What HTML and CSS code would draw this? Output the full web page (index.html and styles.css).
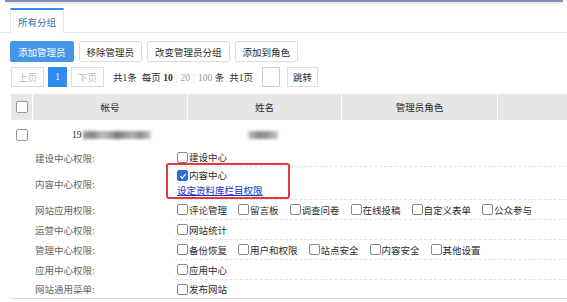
FILE: index.html
```html
<!DOCTYPE html>
<html lang="zh-CN">
<head>
    <meta charset="UTF-8">
    <title>管理员列表</title>
    <link rel="stylesheet" href="styles.css">
</head>
<body>
<div class="frame-top"></div>

<div class="tabs">
    <span class="tab">所有分组</span>
</div>

<div class="toolbar">
    <button class="btn btn-primary">添加管理员</button>
    <button class="btn">移除管理员</button>
    <button class="btn">改变管理员分组</button>
    <button class="btn">添加到角色</button>
</div>

<div class="pager">
    <span class="pg disabled">上页</span>
    <span class="pg current">1</span>
    <span class="pg disabled">下页</span>
    <span class="pg-info">共1条</span>
    <span class="pg-info">每页 <b>10</b><i class="sep">|</i><span class="size">20</span><i class="sep">|</i><span class="size">100</span> 条</span>
    <span class="pg-info">共1页</span>
    <input class="pg-input" type="text">
    <span class="pg go">跳转</span>
</div>

<div class="grid">
    <div class="grid-head">
        <div class="cell"><span class="cb"></span></div>
        <div class="cell">帐号</div>
        <div class="cell">姓名</div>
        <div class="cell">管理员角色</div>
        <div class="cell"></div>
    </div>

    <div class="grid-row">
        <div class="cell"><span class="cb"></span></div>
        <div class="cell account">19<span class="blur blur-long"></span></div>
        <div class="cell"><span class="blur blur-short"></span></div>
        <div class="cell"></div>
        <div class="cell"></div>
    </div>

    <div class="perms">
        <div class="perm">
            <div class="perm-label">建设中心权限:</div>
            <div class="perm-items">
                <label class="item"><span class="cb"></span>建设中心</label>
            </div>
        </div>
        <div class="perm">
            <div class="perm-label">内容中心权限:</div>
            <div class="perm-items stacked">
                <label class="item"><span class="cb checked"><svg viewBox="0 0 10 10" width="8" height="8"><path d="M1.5 5.2 L4 7.6 L8.6 2.4" fill="none" stroke="#fff" stroke-width="1.6"/></svg></span>内容中心</label>
                <a class="set-link" href="#">设定资料库栏目权限</a>
                <div class="mark"></div>
            </div>
        </div>
        <div class="perm">
            <div class="perm-label">网站应用权限:</div>
            <div class="perm-items">
                <label class="item"><span class="cb"></span>评论管理</label>
                <label class="item"><span class="cb"></span>留言板</label>
                <label class="item"><span class="cb"></span>调查问卷</label>
                <label class="item"><span class="cb"></span>在线投稿</label>
                <label class="item"><span class="cb"></span>自定义表单</label>
                <label class="item"><span class="cb"></span>公众参与</label>
            </div>
        </div>
        <div class="perm">
            <div class="perm-label">运营中心权限:</div>
            <div class="perm-items">
                <label class="item"><span class="cb"></span>网站统计</label>
            </div>
        </div>
        <div class="perm">
            <div class="perm-label">管理中心权限:</div>
            <div class="perm-items">
                <label class="item"><span class="cb"></span>备份恢复</label>
                <label class="item"><span class="cb"></span>用户和权限</label>
                <label class="item"><span class="cb"></span>站点安全</label>
                <label class="item"><span class="cb"></span>内容安全</label>
                <label class="item"><span class="cb"></span>其他设置</label>
            </div>
        </div>
        <div class="perm">
            <div class="perm-label">应用中心权限:</div>
            <div class="perm-items">
                <label class="item"><span class="cb"></span>应用中心</label>
            </div>
        </div>
        <div class="perm last">
            <div class="perm-label">网站通用菜单:</div>
            <div class="perm-items">
                <label class="item"><span class="cb"></span>发布网站</label>
            </div>
        </div>
    </div>
</div>
</body>
</html>
```

FILE: styles.css
```css
html, body {
    overflow: hidden;
}

body {
    margin: 0;
    font-family: "Noto Sans CJK SC", "Noto Sans", sans-serif;
    font-size: 9.5px;
    color: #2b2b2b;
    background-color: #fff;
}

.frame-top {
    height: 2px;
    margin: 0 4px 0 5px;
    background-color: #7f8fb6;
    box-shadow: 0 1px 3px rgba(0, 0, 0, 0.18);
}

/* tabs */
.tabs {
    display: flex;
    height: 24px;
    margin-top: 6px;
    padding-left: 10px;
    border-bottom: 1px solid #e6e6e6;
}

.tab {
    display: flex;
    align-items: center;
    height: 23px;
    padding: 0 7px;
    border-top: 2px solid #2d8cf0;
    border-left: 1px solid #e6e6e6;
    border-right: 1px solid #e6e6e6;
    background-color: #fff;
    color: #3a6ea5;
    margin-bottom: -1px;
}

/* buttons */
.toolbar {
    display: flex;
    gap: 5px;
    margin-top: 8px;
    padding-left: 10px;
}

.btn {
    height: 21px;
    padding: 0 7px;
    font-family: inherit;
    font-size: 9.5px;
    color: #2b2b2b;
    background-color: #fff;
    border: 1px solid #dcdcdc;
    border-radius: 2px;
}

.btn-primary {
    color: #fff;
    background-color: #4596e6;
    border-color: #4596e6;
}

/* pager */
.pager {
    display: flex;
    align-items: center;
    margin-top: 5px;
    padding-left: 11px;
    font-family: "Liberation Serif", "Noto Sans CJK SC", serif;
    height: 20px;
}

.pg {
    display: flex;
    align-items: center;
    justify-content: center;
    height: 18px;
    padding: 0 6px;
    margin-right: 4px;
    border: 1px solid #ddd;
    background-color: #fff;
    font-family: "Noto Sans CJK SC", sans-serif;
}

.pg.disabled {
    color: #bbb;
}

.pg.current {
    width: 19px;
    padding: 0;
    box-sizing: border-box;
    height: 20px;
    border-color: #2d8cf0;
    background-color: #2d8cf0;
    color: #fff;
    font-family: "Liberation Serif", serif;
}

.pg-info {
    margin-left: 5px;
}

.pager b {
    font-weight: bold;
}

.pager .size {
    color: #999;
}

.pager .sep {
    font-style: normal;
    color: #ddd;
    margin: 0 3px;
}

.pg-input {
    width: 18px;
    height: 20px;
    box-sizing: border-box;
    margin: 0 7px 0 9px;
    padding: 0;
    border: 1px solid #ccc;
}

.pg.go {
    color: #2b2b2b;
    padding: 0 5px;
}

/* table */
.grid {
    width: 660px;
    margin: 7px 0 0 11px;
}

.grid-head,
.grid-row {
    display: grid;
    grid-template-columns: 21px 154px 153px 155px 1fr;
    column-gap: 1px;
}

.grid-head {
    height: 26px;
    background-color: #fff;
}

.grid-head .cell {
    display: flex;
    align-items: center;
    justify-content: center;
    background-color: #e6e6e6;
}

.grid-row {
    height: 26px;
    padding-top: 2px;
}

.grid-row .cell {
    display: flex;
    align-items: center;
}

.grid-row .cell:first-child {
    justify-content: center;
}

.account {
    padding-left: 39px;
    font-family: "Liberation Serif", serif;
}

.grid-row .cell:nth-child(3) {
    padding-left: 60px;
}

.blur {
    display: inline-block;
    height: 8px;
    filter: blur(1.4px);
}

.blur-long {
    width: 68px;
    margin-left: 1px;
    background: linear-gradient(90deg, #999 0, #888 15%, #bbb 28%, #aaa 38%, #777 50%, #999 62%, #b0b0b0 72%, #8c8c8c 85%, #ccc 100%);
}

.blur-short {
    width: 30px;
    background: linear-gradient(90deg, #c4c4c4, #888 35%, #999 65%, #c8c8c8);
}

.cb {
    display: inline-flex;
    align-items: center;
    justify-content: center;
    width: 9px;
    height: 9px;
    border: 1px solid #888;
    border-radius: 2px;
    background-color: #fff;
    flex-shrink: 0;
}

.grid-head .cb,
.grid-row .cb {
    width: 10px;
    height: 10px;
    border-color: #999;
}

.cb.checked {
    background-color: #2b6fd8;
    border-color: #2b6fd8;
}

/* permissions */
.perms {
    border-bottom: 1px solid #ddd;
}

.perm {
    display: grid;
    grid-template-columns: 164px 1fr;
}

.perm-label {
    display: flex;
    align-items: center;
    padding-left: 24px;
    color: #666;
}

.perm-items {
    position: relative;
    display: flex;
    align-items: center;
    min-height: 19px;
    padding-left: 2px;
    border-bottom: 1px dashed #e2e2e2;
}

.perm:first-child .perm-items {
    min-height: 18px;
}

.perm.last .perm-items {
    border-bottom: none;
    min-height: 18px;
}

.perm-items.stacked {
    flex-direction: column;
    align-items: flex-start;
    padding-top: 1px;
    min-height: 31px;
    line-height: 15px;
}

.item {
    display: flex;
    align-items: center;
    margin-right: 11px;
}

.item .cb {
    margin-right: 1px;
}

.set-link {
    color: #1533c8;
    text-decoration: underline;
}

.mark {
    position: absolute;
    left: -9px;
    top: -4px;
    width: 120px;
    height: 32px;
    border: 2px solid #e2393e;
    border-radius: 3px;
}
```
